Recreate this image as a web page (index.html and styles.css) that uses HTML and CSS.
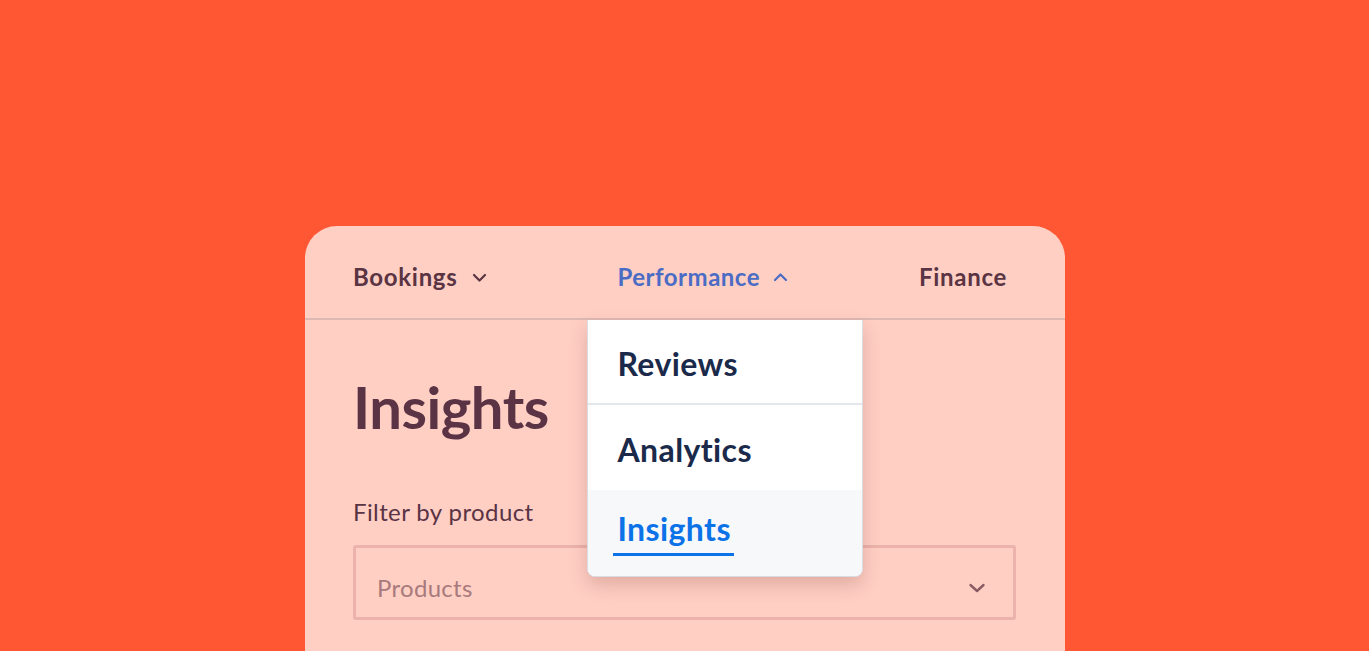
FILE: index.html
```html
<!DOCTYPE html>
<html>
<head>
<meta charset="utf-8">
<link rel="stylesheet" href="styles.css">
</head>
<body>
<div class="stage">
  <div class="card">
    <nav class="nav">
      <div class="nav-item">Bookings
        <svg class="chev" width="15" height="15" viewBox="0 0 15 15"><path d="M2 5 L7.5 10.5 L13 5" fill="none" stroke="currentColor" stroke-width="2.2" stroke-linecap="round" stroke-linejoin="round"/></svg>
      </div>
      <div class="nav-item active">Performance
        <svg class="chev" width="15" height="15" viewBox="0 0 15 15"><path d="M2 10 L7.5 4.5 L13 10" fill="none" stroke="currentColor" stroke-width="2.2" stroke-linecap="round" stroke-linejoin="round"/></svg>
        <div class="menu">
          <div class="menu-item">Reviews</div>
          <div class="menu-item">Analytics</div>
          <div class="menu-item current"><span>Insights</span></div>
        </div>
      </div>
      <div class="nav-item">Finance</div>
    </nav>
    <div class="content">
      <h1 class="title">Insights</h1>
      <label class="label">Filter by product</label>
      <div class="select">
        <span class="placeholder">Products</span>
        <svg class="select-chev" width="20" height="20" viewBox="0 0 20 20"><path d="M3.5 7 L10 13 L16.5 7" fill="none" stroke="currentColor" stroke-width="2.4" stroke-linecap="round" stroke-linejoin="round"/></svg>
      </div>
    </div>
  </div>
</div>
</body>
</html>
```
FILE: styles.css
```css
html, body {
  margin: 0;
  padding: 0;
  height: 100%;
  overflow: hidden;
}
body {
  background: #FF5634;
  font-family: Lato, "Noto Sans", sans-serif;
}
.stage {
  padding-top: 226px;
  padding-left: 305px;
}
.card {
  width: 760px;
  height: 460px;
  background: #FFCFC4;
  border-radius: 32px 32px 0 0;
}
.nav {
  height: 94px;
  box-sizing: border-box;
  border-bottom: 2px solid #DDB9B2;
  display: flex;
  justify-content: space-between;
  align-items: stretch;
  padding: 0 58px 0 48px;
}
.nav-item {
  position: relative;
  font-size: 24px;
  font-weight: 700;
  color: #5A3442;
  display: flex;
  align-items: center;
  gap: 14px;
  letter-spacing: 0.7px;
  padding-top: 8px;
}
.nav-item.active {
  color: #4B6CC4;
  letter-spacing: 0.5px;
  gap: 13px;
}
.chev {
  margin-top: 2px;
}
.menu {
  position: absolute;
  top: calc(100% + 2px);
  left: -30px;
  width: 274px;
  background: #fff;
  border: 1px solid #D9DDE3;
  border-top: none;
  border-radius: 0 0 8px 8px;
  box-shadow: 0 8px 18px rgba(120, 50, 40, 0.22);
  overflow: hidden;
  letter-spacing: 0.4px;
}
.menu-item {
  height: 85px;
  display: flex;
  align-items: center;
  padding: 4px 0 0 29px;
  font-size: 32px;
  font-weight: 700;
  color: #1B2A4A;
  border-bottom: 2px solid #E3E7EC;
  box-sizing: border-box;
}
.menu-item:nth-child(2) {
  border-bottom: none;
}
.menu-item.current {
  background: #F7F8FA;
  border-bottom: none;
  color: #0B72E8;
  height: 86px;
  align-items: flex-start;
  padding-top: 21px;
}
.menu-item.current span {
  display: inline-block;
  line-height: 36px;
  border-bottom: 3px solid #0B72E8;
  padding: 0 3px 6px 4px;
  margin-left: -4px;
}
.content {
  padding: 52px 48px 0 48px;
}
.title {
  margin: 0;
  font-size: 58px;
  font-weight: 700;
  color: #5A3344;
  line-height: 70px;
  letter-spacing: -0.5px;
}
.label {
  display: block;
  margin-top: 56px;
  font-size: 24px;
  color: #5A3344;
  line-height: 28px;
  letter-spacing: 0.4px;
}
.select {
  margin-top: 19px;
  width: 663px;
  height: 75px;
  box-sizing: border-box;
  border: 3px solid #EBB3AB;
  border-radius: 3px;
  display: flex;
  align-items: center;
  justify-content: space-between;
  padding: 10px 26px 0 21px;
}
.placeholder {
  font-size: 24px;
  color: #A87A7C;
  letter-spacing: 0.3px;
}
.select-chev {
  color: #8A5C63;
}
```
